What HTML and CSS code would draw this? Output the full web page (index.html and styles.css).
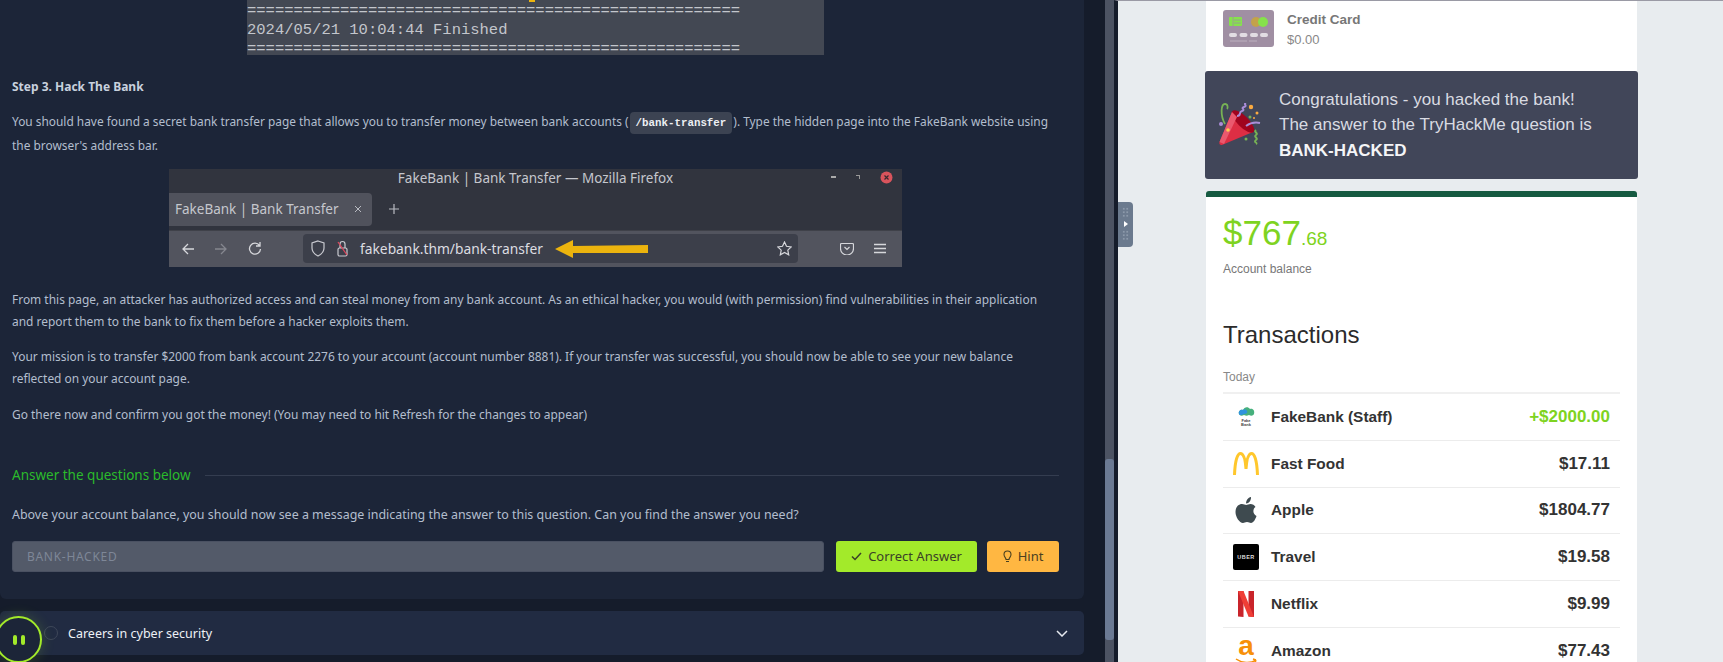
FILE: index.html
```html
<!DOCTYPE html>
<html lang="en">
<head>
    <meta charset="UTF-8">
    <meta name="viewport" content="width=device-width, initial-scale=1.0">
    <title>Hack The Bank</title>
    <link rel="stylesheet" href="styles.css">
</head>
<body>
    <div class="split">
        <!-- Lesson side -->
        <main class="lesson">
            <section class="panel">
                <div class="terminal">
                    <div class="terminal-tip"></div>
                    <div>=====================================================</div>
                    <div>2024/05/21 10:04:44 Finished</div>
                    <div>=====================================================</div>
                </div>

                <p class="step">Step 3. Hack The Bank</p>
                <p class="para para-first">You should have found a secret bank transfer page that allows you to transfer money between bank accounts (<code class="chip">/bank-transfer</code>). Type the hidden page into the FakeBank website using the browser's address bar.</p>

                <!-- Browser screenshot -->
                <div class="browser">
                    <div class="browser-top">
                        <div class="browser-title">FakeBank | Bank Transfer — Mozilla Firefox</div>
                        <div class="win-btns">
                            <span class="win-min"></span>
                            <span class="win-max"></span>
                            <svg class="win-close" width="13" height="13" viewBox="0 0 13 13"><circle cx="6.5" cy="6.5" r="6" fill="#d9545c"/><path d="M4.5 4.5l4 4M8.500 4.500l-4 4" stroke="#3a2a30" stroke-width="1.200"/></svg>
                        </div>
                        <div class="tabs">
                            <div class="tab"><span>FakeBank | Bank Transfer</span><svg width="8" height="8" viewBox="0 0 8 8"><path d="M1 1l6 6M7 1l-6 6" stroke="#b9bbc2" stroke-width="1"/></svg></div>
                            <svg class="tab-plus" width="12" height="12" viewBox="0 0 12 12"><path d="M6 1v10M1 6h10" stroke="#b9bbc2" stroke-width="1.200"/></svg>
                        </div>
                    </div>
                    <div class="browser-nav">
                        <svg width="14" height="14" viewBox="0 0 14 14" fill="none"><path d="M13 7H2M7 2L2 7l5 5" stroke="#d6d7db" stroke-width="1.300"/></svg>
                        <svg class="nav-forward" width="14" height="14" viewBox="0 0 14 14" fill="none"><path d="M1 7h11M7 2l5 5-5 5" stroke="#85878f" stroke-width="1.300"/></svg>
                        <svg class="nav-reload" width="14" height="15" viewBox="0 0 14 15" fill="none"><path d="M11.500 4.500A5.500 5.500 0 1 0 12.500 8M12 1v4H8" stroke="#d6d7db" stroke-width="1.300"/></svg>
                        <div class="urlbar">
                            <svg width="14" height="17" viewBox="0 0 14 17" fill="none"><path d="M7 1l6 2v5c0 4-3 6.500-6 8-3-1.500-6-4-6-8V3z" stroke="#c9cad0" stroke-width="1.200"/></svg>
                            <svg class="url-lock" width="13" height="17" viewBox="0 0 13 17" fill="none"><rect x="2" y="8" width="9" height="8" rx="1.500" stroke="#c9cad0" stroke-width="1.200"/><path d="M4 8V4a2.500 2.500 0 0 1 5 0v4" stroke="#c9cad0" stroke-width="1.200"/><path d="M2 2l9 13" stroke="#e0465c" stroke-width="1.300"/></svg>
                            <span class="url-text">fakebank.thm/bank-transfer</span>
                            <svg class="url-arrow" width="93" height="18" viewBox="0 0 93 18"><path d="M0 9L18 0v6l75-1v8l-75 0v5z" fill="#ecb40e"/></svg>
                            <svg class="url-star" width="15" height="15" viewBox="0 0 15 15" fill="none"><path d="M7.500 1l2 4.300 4.700.6-3.400 3.200.9 4.700-4.200-2.300-4.200 2.300.9-4.700L.8 5.900l4.700-.6z" stroke="#d6d7db" stroke-width="1.200"/></svg>
                        </div>
                        <svg class="nav-pocket" width="14" height="13" viewBox="0 0 14 13" fill="none"><path d="M1.500 1h11a1 1 0 0 1 1 1v4a6.500 6.500 0 0 1-13 0V2a1 1 0 0 1 1-1z" stroke="#d6d7db" stroke-width="1.200" transform="translate(0 .5)"/><path d="M4.500 5L7 7.500 9.500 5" stroke="#d6d7db" stroke-width="1.200"/></svg>
                        <svg class="nav-menu" width="12" height="11" viewBox="0 0 12 11"><path d="M0 1.500h12M0 5.500h12M0 9.500h12" stroke="#d6d7db" stroke-width="1.300"/></svg>
                    </div>
                </div>

                <p class="para para-after-browser">From this page, an attacker has authorized access and can steal money from any bank account. As an ethical hacker, you would (with permission) find vulnerabilities in their application and report them to the bank to fix them before a hacker exploits them.</p>
                <p class="para">Your mission is to transfer $2000 from bank account 2276 to your account (account number 8881). If your transfer was successful, you should now be able to see your new balance reflected on your account page.</p>
                <p class="para para-go">Go there now and confirm you got the money! (You may need to hit Refresh for the changes to appear)</p>

                <div class="answer-head">
                    <span>Answer the questions below</span>
                    <div class="answer-rule"></div>
                </div>
                <p class="para question">Above your account balance, you should now see a message indicating the answer to this question. Can you find the answer you need?</p>

                <div class="answer-form">
                    <div class="answer-input">BANK-HACKED</div>
                    <button class="btn btn-correct" type="button">
                        <svg width="11" height="9" viewBox="0 0 11 9" fill="none"><path d="M1 4.500L4 7.500 10 1" stroke="#3a4028" stroke-width="1.500"/></svg>
                        Correct Answer
                    </button>
                    <button class="btn btn-hint" type="button">
                        <svg width="9" height="13" viewBox="0 0 9 13" fill="none"><path d="M3 9.500C3 7.500 1 7 1 4.500a3.500 3.500 0 0 1 7 0C8 7 6 7.500 6 9.500zM3 11.500h3" stroke="#4a4020" stroke-width="1.100"/></svg>
                        Hint
                    </button>
                </div>
            </section>

            <section class="accordion">
                <span class="acc-check"></span>
                <span class="acc-title">Careers in cyber security</span>
                <svg class="acc-chevron" width="12" height="7" viewBox="0 0 12 7" fill="none"><path d="M1 1l5 5 5-5" stroke="#e6e9ef" stroke-width="1.500"/></svg>
            </section>

            <div class="rec-btn"><span></span><span></span></div>
        </main>

        <div class="scrollbar"><div class="scroll-thumb"></div></div>

        <!-- FakeBank side -->
        <aside class="bank">
            <div class="split-handle">
                <div class="handle-dots"></div>
                <div class="handle-arrow"></div>
                <div class="handle-dots"></div>
            </div>

            <div class="bank-col">
                <div class="card-top">
                    <svg class="cc-icon" width="51" height="37" viewBox="0 0 51 37">
                        <rect width="51" height="37" rx="3" fill="#a08fa3"/>
                        <rect x="6" y="7" width="13" height="9" rx="1" fill="#86e24c"/>
                        <path d="M10 7v9M11 10h7M11 13h7" stroke="#a08fa3" stroke-width=".8"/>
                        <circle cx="33" cy="12" r="5" fill="#c3a24a"/>
                        <circle cx="40" cy="12" r="5" fill="#86e24c"/>
                        <rect x="6" y="23" width="8" height="4" rx="2" fill="#e2dde3"/>
                        <rect x="16.500" y="23" width="8" height="4" rx="2" fill="#e2dde3"/>
                        <rect x="27" y="23" width="8" height="4" rx="2" fill="#e2dde3"/>
                        <rect x="37" y="23" width="8" height="4" rx="2" fill="#e2dde3"/>
                        <path d="M7 31h17M26 31h8" stroke="#bdb1bf" stroke-width="1"/>
                    </svg>
                    <div>
                        <div class="cc-name">Credit Card</div>
                        <div class="cc-value">$0.00</div>
                    </div>
                </div>

                <div class="congrats">
                    <svg class="popper" width="44" height="44" viewBox="0 0 44 44" fill="none">
                        <path d="M.5 39c-.8 2.500 1 3.500 3 2.800L34 29 13 9z" fill="#dd2e44"/>
                        <ellipse cx="24" cy="18.500" rx="5.500" ry="15" transform="rotate(-45 24 18.500)" fill="#a0041e"/>
                        <path d="M.5 39L13 9l5 5L5 41z" fill="#ea596e"/>
                        <circle cx="9" cy="27" r="1.800" fill="#ffcc4d"/>
                        <circle cx="2" cy="21" r="2" fill="#aa8dd8"/>
                        <path d="M6 21C1 12 2 1 6 1c3 0 3 4 2 5" stroke="#77b255" stroke-width="1.800"/>
                        <path d="M18 13c5 0 1-4 5-5s-2-3 2-4-1-3 2-4" stroke="#aa8dd8" stroke-width="2"/>
                        <path d="M27 23c4-3 9-4 14-3" stroke="#aa8dd8" stroke-width="2"/>
                        <path d="M37 27c-3 2 3 3 0 5s3 3 0 5 2 3 0 4" stroke="#77b255" stroke-width="2"/>
                        <circle cx="32" cy="4" r="2.200" fill="#fcab40"/>
                        <circle cx="38" cy="10" r="1.500" fill="#fcab40"/>
                        <circle cx="31" cy="14" r="1.500" fill="#77b255"/>
                        <circle cx="27" cy="36" r="1.500" fill="#77b255"/>
                        <circle cx="35" cy="15" r="1" fill="#fcab40"/>
                    </svg>
                    <div class="congrats-text">
                        <div>Congratulations - you hacked the bank!</div>
                        <div>The answer to the TryHackMe question is</div>
                        <strong>BANK-HACKED</strong>
                    </div>
                </div>

                <div class="card-main">
                    <div class="balance">$767<small>.68</small></div>
                    <div class="balance-label">Account balance</div>

                    <h2 class="tx-title">Transactions</h2>
                    <div class="tx-day">Today</div>

                    <div class="tx-row">
                        <div class="tx-icon tx-fakebank">
                            <svg width="17" height="13" viewBox="0 0 17 13"><path d="M1 8c-1-3 2-5 4-4 1-3 5-4 7-1 3-1 5 2 4 5-1 2-3 2-5 1-2 1-3 1-5 0-2 1-4 1-5-1z" fill="#46b07c"/><path d="M1 8c-1-3 2-5 4-4 1-1 3-1 4 1 1 2-1 3-3 3-2 1-4 2-5 0z" fill="#2f93dd"/></svg>
                            <span>Fake<br>Bank</span>
                        </div>
                        <div class="tx-name">FakeBank (Staff)</div>
                        <div class="tx-amount tx-plus">+$2000.00</div>
                    </div>
                    <div class="tx-row">
                        <div class="tx-icon">
                            <svg width="26" height="23" viewBox="0 0 26 23" fill="none"><path d="M1.500 23C2 10 4 1.500 7.500 1.500S12.500 10 13 17C13.500 10 15 1.500 18.500 1.500S24 10 24.500 23" stroke="#ffc72c" stroke-width="3"/></svg>
                        </div>
                        <div class="tx-name">Fast Food</div>
                        <div class="tx-amount">$17.11</div>
                    </div>
                    <div class="tx-row">
                        <div class="tx-icon">
                            <svg width="22" height="26" viewBox="0 0 22 26"><path d="M15.500 7c2 0 4 1 5 3-3 2-3 7 1 9-1 3-3 7-5.500 7-1.500 0-2-1-4-1s-2.500 1-4 1C4.500 26 .5 20 .5 15c0-5 3-8 6.500-8 1.800 0 3 1 4.200 1 1.100 0 2.500-1 4.300-1z" fill="#3e4a4f"/><path d="M11 6.500c0-3 2-6 5-6.500 .3 3-2 6.500-5 6.500z" fill="#3e4a4f"/></svg>
                        </div>
                        <div class="tx-name">Apple</div>
                        <div class="tx-amount">$1804.77</div>
                    </div>
                    <div class="tx-row">
                        <div class="tx-icon"><div class="uber-tile">UBER</div></div>
                        <div class="tx-name">Travel</div>
                        <div class="tx-amount">$19.58</div>
                    </div>
                    <div class="tx-row">
                        <div class="tx-icon">
                            <svg width="16" height="26" viewBox="0 0 16 26"><path d="M0 0h5.500v26L0 25.500z" fill="#c9242b"/><path d="M10.500 0H16v26l-5.500-.5z" fill="#c9242b"/><path d="M0 0h5.500L16 26l-5.500-.5z" fill="#ef3e36"/></svg>
                        </div>
                        <div class="tx-name">Netflix</div>
                        <div class="tx-amount">$9.99</div>
                    </div>
                    <div class="tx-row">
                        <div class="tx-icon tx-amazon">
                            <span>a</span>
                            <svg width="22" height="7" viewBox="0 0 22 7" fill="none"><path d="M1 1c6 4 14 5 20 1M21 2l-3-1M21 2l-1 3" stroke="#f79009" stroke-width="1.500"/></svg>
                        </div>
                        <div class="tx-name">Amazon</div>
                        <div class="tx-amount">$77.43</div>
                    </div>
                </div>
            </div>
        </aside>
    </div>
</body>
</html>
```

FILE: styles.css
```css
/* General styling */
* {
    box-sizing: border-box;
}

html, body {
    margin: 0;
    height: 662px;
    overflow: hidden;
}

body {
    font-family: "Noto Sans", sans-serif;
    background-color: #e8ecef;
}

.split {
    display: flex;
    height: 662px;
}

/* Lesson side */
.lesson {
    position: relative;
    width: 1105px;
    height: 662px;
    overflow: hidden;
    background-color: #151c2b;
}

.panel {
    width: 1084px;
    height: 599px;
    padding: 0 25px 0 12px;
    background-color: #1c2538;
    border-radius: 0 0 6px 6px;
    overflow: hidden;
}

.terminal {
    position: relative;
    width: 577px;
    height: 55px;
    margin-left: 235px;
    padding-top: 2px;
    background-color: #434853;
    color: #c3c6cc;
    font-family: "Liberation Mono", monospace;
    font-size: 15.5px;
    line-height: 19px;
    white-space: nowrap;
}

.terminal-tip {
    position: absolute;
    top: 0;
    left: 282px;
    width: 6px;
    height: 2px;
    background-color: #ecb40e;
}

.step {
    margin: 20px 0 0;
    font-size: 12px;
    font-weight: 700;
    line-height: 23px;
    color: #c8d1de;
}

.para {
    margin: 12px 0 0;
    font-size: 11.950px;
    line-height: 22.5px;
    color: #b3bece;
}

.para-first {
    font-size: 11.900px;
}

.para-after-browser {
    margin-top: 22px;
}

.para-go {
    margin-top: 13px;
}

.chip {
    display: inline-block;
    height: 22px;
    padding: 0 6px;
    margin: 0 1px;
    background-color: #3c4352;
    border-radius: 4px;
    color: #eef0f4;
    font-family: "Liberation Mono", monospace;
    font-size: 10.800px;
    font-weight: 700;
    line-height: 22px;
    vertical-align: middle;
}

/* Browser screenshot */
.browser {
    width: 733px;
    height: 98px;
    margin: 12.500px 0 0 157px;
    background-color: #31343e;
    font-size: 13px;
    color: #c5c7cd;
}

.browser-top {
    position: relative;
    height: 61px;
}

.browser-title {
    line-height: 18px;
    text-align: center;
    font-size: 13.500px;
}

.win-btns {
    position: absolute;
    top: 2px;
    right: 9px;
    display: flex;
    align-items: center;
    gap: 20px;
}

.win-min {
    width: 5px;
    height: 2px;
    background-color: #aaa;
}

.win-max {
    width: 4px;
    height: 4px;
    border-top: 1px solid #999;
    border-right: 1px solid #999;
}

.tabs {
    display: flex;
    align-items: center;
    gap: 16px;
    margin-top: 6px;
}

.tab {
    display: flex;
    align-items: center;
    justify-content: space-between;
    width: 203px;
    height: 33px;
    padding: 0 10px 0 6px;
    background-color: #50525c;
    border-radius: 0 4px 4px 0;
    font-size: 13.500px;
}

.browser-nav {
    display: flex;
    align-items: center;
    height: 37px;
    padding-left: 12px;
    background-color: #52545e;
    border-top: 1px solid #3f4149;
}

.nav-forward {
    margin-left: 19px;
}

.nav-reload {
    margin-left: 20px;
}

.urlbar {
    display: flex;
    align-items: center;
    width: 495px;
    height: 29px;
    margin-left: 41px;
    padding: 0 6px 0 8px;
    background-color: #3c3f4a;
    border-radius: 4px;
}

.url-lock {
    margin-left: 11px;
}

.url-text {
    margin-left: 11px;
    font-size: 13.800px;
    color: #dcdde1;
}

.url-arrow {
    margin-left: 12px;
}

.url-star {
    margin-left: auto;
}

.nav-pocket {
    margin-left: 42px;
}

.nav-menu {
    margin-left: 20px;
}

/* Answer block */
.answer-head {
    display: flex;
    align-items: center;
    height: 22px;
    margin-top: 38px;
    color: #2bbb2b;
    font-size: 13.500px;
}

.answer-rule {
    flex-grow: 1;
    height: 1px;
    margin-left: 14px;
    background-color: #343d50;
}

.question {
    margin-top: 18px;
    font-size: 12.450px;
}

.answer-form {
    display: flex;
    gap: 12px;
    margin-top: 14px;
}

.answer-input {
    flex-shrink: 0;
    width: 812px;
    height: 31px;
    padding-left: 14px;
    background-color: #535a69;
    border: 1px solid #4a5162;
    border-radius: 3px;
    color: #7e8797;
    font-size: 12px;
    letter-spacing: 0.7px;
    line-height: 29px;
}

.btn {
    display: flex;
    flex-shrink: 0;
    align-items: center;
    justify-content: center;
    gap: 6px;
    height: 31px;
    padding: 0;
    border: none;
    border-radius: 3px;
    font-family: inherit;
    font-size: 13px;
}

.btn-correct {
    width: 141px;
    background-color: #a3ea2a;
    color: #3a4028;
}

.btn-hint {
    width: 72px;
    margin-left: -2px;
    background-color: #ffb742;
    color: #4a4020;
}

.accordion {
    display: flex;
    align-items: center;
    width: 1084px;
    height: 44px;
    margin-top: 12px;
    padding: 0 16px 0 44px;
    background-color: #212b42;
    border-radius: 5px;
}

.acc-check {
    width: 14px;
    height: 14px;
    border: 1px solid #3e4759;
    border-radius: 50%;
}

.acc-title {
    margin-left: 10px;
    color: #eef1f6;
    font-size: 12.500px;
}

.acc-chevron {
    margin-left: auto;
}

.rec-btn {
    position: absolute;
    left: -5px;
    top: 616px;
    display: flex;
    align-items: center;
    justify-content: center;
    gap: 4px;
    width: 47px;
    height: 47px;
    background-color: #1c2538;
    border: 2px solid #a3ea2a;
    border-radius: 50%;
    box-shadow: 0 0 14px rgba(163, 234, 42, 0.2);
}

.rec-btn span {
    width: 4px;
    height: 10px;
    background-color: #a3ea2a;
    border-radius: 2px;
}

.scrollbar {
    position: relative;
    width: 9px;
    height: 662px;
    background-color: #4c5363;
}

.scroll-thumb {
    position: absolute;
    top: 459px;
    left: 0;
    width: 9px;
    height: 181px;
    background-color: #6b7a94;
    border-radius: 3px;
}

/* FakeBank side */
.bank {
    position: relative;
    flex-grow: 1;
    height: 662px;
    overflow: hidden;
    background-color: #e8ecef;
    border-left: 4px solid #151c2b;
    border-top: 1px solid #9a9aa5;
    font-family: "Liberation Sans", Arial, sans-serif;
}

.split-handle {
    position: absolute;
    top: 201px;
    left: 0;
    display: flex;
    flex-direction: column;
    align-items: center;
    gap: 3px;
    width: 15px;
    height: 45px;
    padding-top: 5px;
    background-color: #6b7a8e;
    border-radius: 0 4px 4px 0;
}

.handle-dots {
    width: 7px;
    height: 11px;
    background-image: radial-gradient(circle, #8c99aa 1px, transparent 1.200px);
    background-size: 3.500px 3.500px;
}

.handle-arrow {
    width: 0;
    height: 0;
    border-left: 4px solid #fff;
    border-top: 3px solid transparent;
    border-bottom: 3px solid transparent;
}

.bank-col {
    width: 433px;
    margin-left: 87px;
}

.card-top {
    display: flex;
    gap: 13px;
    height: 70px;
    margin: 0 1px;
    padding: 9px 0 0 17px;
    background-color: #fff;
}

.cc-name {
    margin-top: 2px;
    font-size: 13.500px;
    font-weight: 700;
    line-height: 16px;
    color: #777;
}

.cc-value {
    margin-top: 4px;
    font-size: 13px;
    line-height: 15px;
    color: #888;
}

.congrats {
    display: flex;
    align-items: center;
    gap: 16px;
    height: 108px;
    padding-left: 14px;
    background-color: #414659;
    border-radius: 3px;
    color: #d9dbe2;
    font-size: 17px;
    line-height: 25.500px;
}

.congrats strong {
    color: #f4f5f7;
}

.card-main {
    height: 480px;
    margin: 12px 1px 0;
    padding: 0 17px;
    background-color: #fff;
    border-top: 6px solid #165a41;
    border-radius: 3px 3px 0 0;
}

.balance {
    padding-top: 15px;
    font-size: 35px;
    line-height: 42px;
    color: #7ed321;
}

.balance small {
    font-size: 19px;
}

.balance-label {
    margin-top: 2px;
    font-size: 12px;
    line-height: 14px;
    color: #777;
}

.tx-title {
    margin: 44px 0 0;
    font-size: 24px;
    font-weight: 400;
    line-height: 30px;
    color: #2b2b2b;
}

.tx-day {
    margin-top: 20px;
    height: 24px;
    font-size: 12px;
    line-height: 14px;
    color: #888;
    border-bottom: 2px solid #f0f0f0;
}

.tx-row {
    display: flex;
    align-items: center;
    height: 46.800px;
    padding: 0 10px;
    border-bottom: 1px solid #ececec;
}

.tx-icon {
    display: flex;
    flex-direction: column;
    align-items: center;
    justify-content: center;
    width: 26px;
    height: 30px;
}

.tx-fakebank span {
    font-size: 4px;
    font-weight: 700;
    line-height: 4.500px;
    text-align: center;
    color: #444;
}

.uber-tile {
    width: 26px;
    height: 26px;
    background-color: #000;
    border-radius: 2px;
    color: #ddd;
    font-size: 5.500px;
    font-weight: 700;
    letter-spacing: 0.5px;
    line-height: 26px;
    text-align: center;
}

.tx-amazon span {
    height: 22px;
    font-size: 28px;
    font-weight: 700;
    line-height: 20px;
    color: #f79009;
}

.tx-name {
    margin-left: 12px;
    font-size: 15.400px;
    font-weight: 700;
    color: #333;
}

.tx-amount {
    margin-left: auto;
    font-size: 17px;
    font-weight: 700;
    color: #333;
}

.tx-plus {
    color: #7ed321;
}
```
